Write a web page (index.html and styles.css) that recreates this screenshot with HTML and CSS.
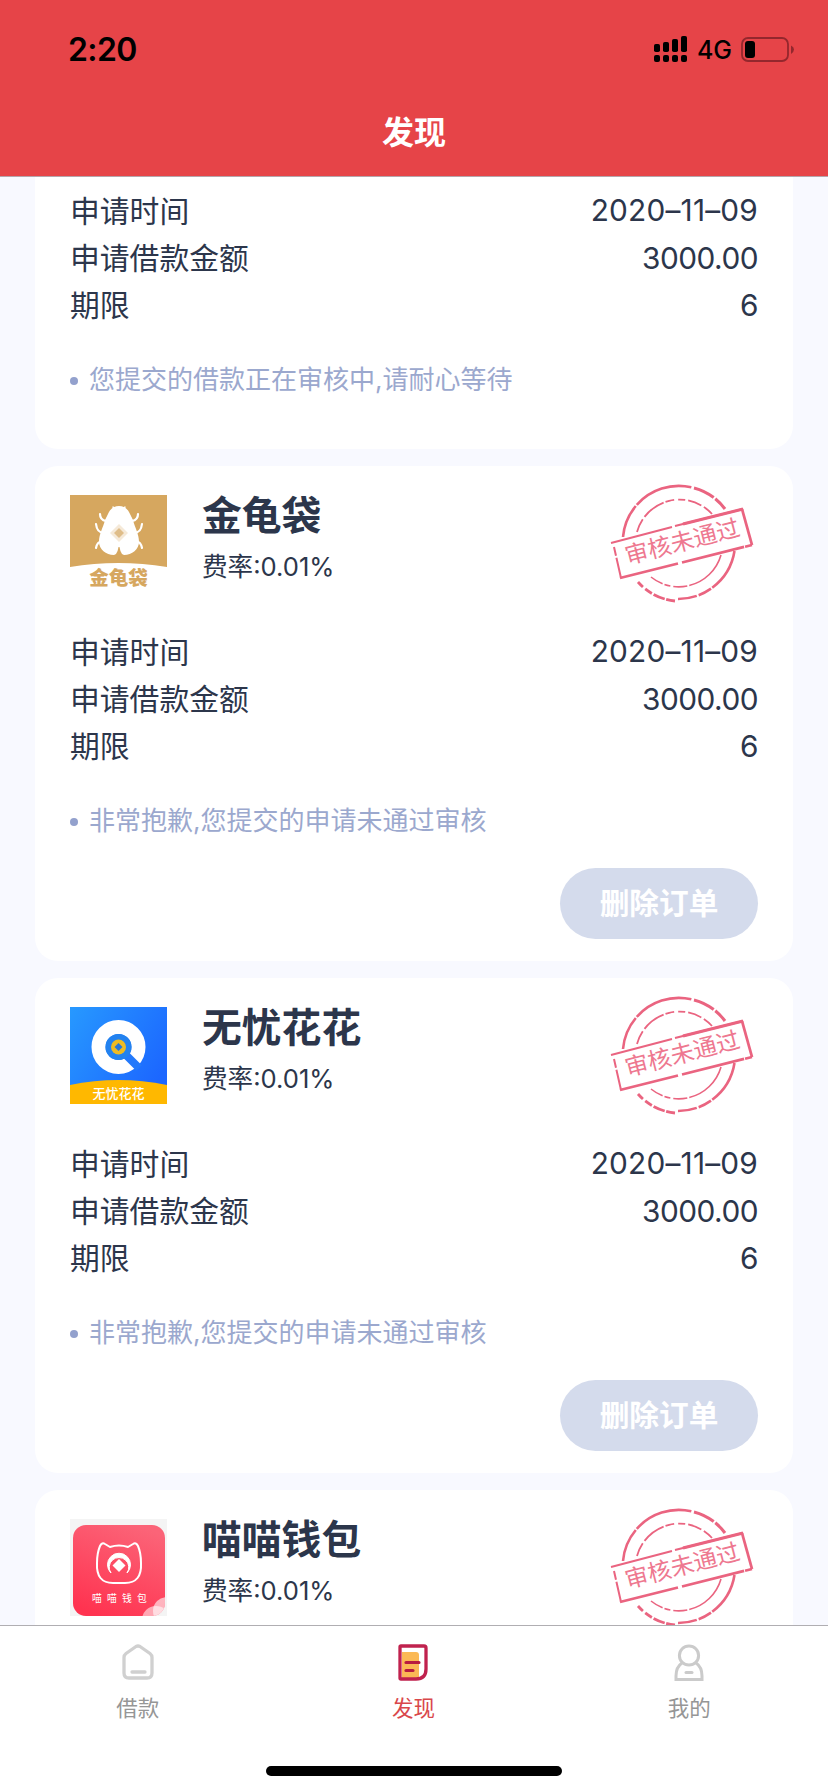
FILE: index.html
```html
<!DOCTYPE html>
<html lang="zh-CN">
<head>
    <meta charset="UTF-8">
    <meta name="viewport" content="width=device-width, initial-scale=1.0">
    <title>发现</title>
    <link rel="stylesheet" href="styles.css">
</head>
<body>
    <header class="header">
        <div class="status">
            <span class="clock">2:20</span>
            <div class="status-right">
                <svg width="34" height="27" viewBox="0 0 34 27">
                    <rect x="0" y="8" width="6" height="8" rx="1.800"/>
                    <rect x="9" y="6" width="6" height="10" rx="1.800"/>
                    <rect x="18" y="3" width="6" height="13" rx="1.800"/>
                    <rect x="27" y="0" width="6" height="16" rx="1.800"/>
                    <rect x="0" y="19" width="6" height="7" rx="2"/>
                    <rect x="9" y="19" width="6" height="7" rx="2"/>
                    <rect x="18" y="19" width="6" height="7" rx="2"/>
                    <rect x="27" y="19" width="6" height="7" rx="2"/>
                </svg>
                <span class="network">4G</span>
                <svg width="54" height="26" viewBox="0 0 54 26">
                    <rect x="1" y="1" width="46" height="23" rx="6" fill="none" stroke="#94272d" stroke-width="1.800"/>
                    <rect x="4" y="4" width="10" height="17" rx="3"/>
                    <path d="M50 8.500Q53 10 53 12.500T50 17Z" fill="#94272d"/>
                </svg>
            </div>
        </div>
        <h1 class="title">发现</h1>
    </header>

    <main class="list">
        <section class="card card-first">
            <dl class="rows">
                <div class="row"><dt>申请时间</dt><dd class="date">2020–11–09</dd></div>
                <div class="row"><dt>申请借款金额</dt><dd>3000.00</dd></div>
                <div class="row"><dt>期限</dt><dd>6</dd></div>
            </dl>
            <p class="note">您提交的借款正在审核中,请耐心等待</p>
        </section>

        <section class="card">
            <div class="head">
                <svg class="logo" viewBox="0 0 97 97">
                    <path d="M0 0H97V72Q48 64 0 72Z" fill="#d6a75f"/>
                    <g fill="none" stroke="#fff" stroke-width="2.200" stroke-linecap="round">
                        <path d="M30 19Q30 25 36 26M68 19Q68 25 62 26M26 29Q27 38 34 38M72 29Q71 38 64 38M26 53Q27 47 32 46M72 53Q71 47 66 46"/>
                        <path stroke-width="1.400" d="M43 12L45 15M55 12L53 15"/>
                    </g>
                    <path d="M49 11C54 11 58 14 60 19L63 25C65 33 69 39 69 47C69 54 62 60 54 60L52 59Q50 56 49.500 52H48.500Q48 56 46 59L44 60C36 60 29 54 29 47C29 39 33 33 35 25L38 19C40 14 44 11 49 11Z" fill="#fff"/>
                    <path d="M49 29L58 38L49 47L40 38Z" fill="#f5e9d8"/>
                    <path d="M49 33L54 38L49 43L44 38Z" fill="#dfbd89"/>
                    <text class="logo-gold" x="48.500" y="89.500">金龟袋</text>
                </svg>
                <div class="info">
                    <h2 class="name">金龟袋</h2>
                    <p class="rate">费率:0.01%</p>
                </div>
                <!-- the other rejected orders reuse this stamp -->
                <svg class="stamp" viewBox="0 0 180 150">
                    <g id="stamp">
                        <g fill="none" stroke="#ea6480">
                            <path stroke-width="2.600" d="M32 72A56 56 0 0 1 101 22.500" stroke-dasharray="34 1.500 60 1"/>
                            <path stroke-width="3" d="M103 23A56 56 0 0 1 134 44" stroke-dasharray="22 2 40"/>
                            <path stroke-width="2.600" d="M143.500 86A57 57 0 0 1 87 134" stroke-dasharray="44 1.500 14 2"/>
                            <path stroke-width="2.800" d="M84 136A57 57 0 0 1 47 117" stroke-dasharray="9 1.500 12 2 8 3"/>
                            <path stroke-width="1.800" d="M46 67A44 44 0 0 1 121 49" stroke-dasharray="14 3 24 2 9 4 7 3"/>
                            <path stroke-width="1.600" d="M130 90A44 44 0 0 1 60 112" stroke-dasharray="46 2 14 3 6 2"/>
                            <path stroke-width="2" d="M20 78L81 62M84 61L152 44"/>
                            <path stroke-width="3" d="M92 59L152 44"/>
                            <path stroke-width="2.800" d="M151 44L161 80"/>
                            <path stroke-width="2" d="M23 82L30 113" stroke-dasharray="9 2 30"/>
                            <path stroke-width="2.800" d="M29 113L87 98.500M91 97.500L161 80" stroke-dasharray="64 1"/>
                        </g>
                        <text class="stamp-text" transform="translate(36.500 99.500) rotate(-14.500)">审核未通过</text>
                    </g>
                </svg>
            </div>
            <dl class="rows">
                <div class="row"><dt>申请时间</dt><dd class="date">2020–11–09</dd></div>
                <div class="row"><dt>申请借款金额</dt><dd>3000.00</dd></div>
                <div class="row"><dt>期限</dt><dd>6</dd></div>
            </dl>
            <p class="note">非常抱歉,您提交的申请未通过审核</p>
            <button class="delete">删除订单</button>
        </section>

        <section class="card">
            <div class="head">
                <svg class="logo" viewBox="0 0 97 97">
                    <defs>
                        <linearGradient id="blue" x1="0" y1="0" x2="1" y2="0.600">
                            <stop offset="0" stop-color="#2799ff"/>
                            <stop offset="1" stop-color="#1c67ff"/>
                        </linearGradient>
                    </defs>
                    <rect width="97" height="97" fill="url(#blue)"/>
                    <circle cx="48.500" cy="40" r="20" fill="none" stroke="#fff" stroke-width="14"/>
                    <path d="M53 45L69 61" stroke="#2379fb" stroke-width="8"/>
                    <circle cx="48.500" cy="40" r="13" fill="#2382ef"/>
                    <circle cx="48.500" cy="40" r="7.500" fill="#eebb22"/>
                    <path d="M48.500 36L52.500 40L48.500 44L44.500 40Z" fill="#2476db"/>
                    <path d="M0 78Q48 68 97 78V97H0Z" fill="#ffb800"/>
                    <text class="logo-white" x="48.500" y="90.500">无忧花花</text>
                </svg>
                <div class="info">
                    <h2 class="name">无忧花花</h2>
                    <p class="rate">费率:0.01%</p>
                </div>
                <svg class="stamp" viewBox="0 0 180 150"><use href="#stamp"/></svg>
            </div>
            <dl class="rows">
                <div class="row"><dt>申请时间</dt><dd class="date">2020–11–09</dd></div>
                <div class="row"><dt>申请借款金额</dt><dd>3000.00</dd></div>
                <div class="row"><dt>期限</dt><dd>6</dd></div>
            </dl>
            <p class="note">非常抱歉,您提交的申请未通过审核</p>
            <button class="delete">删除订单</button>
        </section>

        <section class="card">
            <div class="head">
                <svg class="logo" viewBox="0 0 97 97">
                    <defs>
                        <linearGradient id="pink" x1="0.700" y1="0" x2="0.300" y2="1">
                            <stop offset="0" stop-color="#fb6478"/>
                            <stop offset="1" stop-color="#ff3350"/>
                        </linearGradient>
                        <clipPath id="tile"><rect x="3" y="6" width="92" height="91" rx="13"/></clipPath>
                    </defs>
                    <rect width="97" height="97" fill="#f4f4f4"/>
                    <g clip-path="url(#tile)">
                        <rect x="3" y="6" width="92" height="91" fill="url(#pink)"/>
                        <circle cx="97" cy="92" r="14" fill="#fff" opacity="0.600"/>
                        <circle cx="86" cy="101" r="14" fill="#fff" opacity="0.550"/>
                    </g>
                    <path d="M30 27Q32 23 35 25L40 28Q49 25 58 28L63 25Q66 23 68 27Q71 34 71 44Q72 64 55 64H43Q26 64 27 44Q27 34 30 27Z" fill="none" stroke="#fff" stroke-width="2"/>
                    <path d="M41 54A11.500 11.500 0 1 1 57 54A9.800 9.800 0 1 0 41 54Z" fill="#fff" stroke="#fff"/>
                    <path d="M49 40L55.500 46.500L49 53L42.500 46.500Z" fill="#fff"/>
                    <text class="logo-thin" x="52" y="82.500">喵喵钱包</text>
                </svg>
                <div class="info">
                    <h2 class="name">喵喵钱包</h2>
                    <p class="rate">费率:0.01%</p>
                </div>
                <svg class="stamp" viewBox="0 0 180 150"><use href="#stamp"/></svg>
            </div>
        </section>
    </main>

    <footer class="footer">
        <nav class="tabs">
            <a class="tab">
                <svg width="40" height="40" viewBox="0 0 40 40" fill="none" stroke="#d0d0d0" stroke-width="3.300" stroke-linecap="round" stroke-linejoin="round">
                    <path d="M18 4.500Q20 3.500 22 4.500L32 11.500Q34 13 34 15.500V31Q34 36 29 36H11Q6 36 6 31V15.500Q6 13 8 11.500Z"/>
                    <path d="M14 30H27"/>
                </svg>
                <span>借款</span>
            </a>
            <a class="tab tab-on">
                <svg width="40" height="40" viewBox="0 0 40 40">
                    <path d="M8 10H22Q25 10 25 13V36H8Z" fill="#fbb955"/>
                    <path d="M7 4H30Q32 4 32 6V27Q32 37 22 37H7Q6 37 6 36V5Q6 4 7 4Z" fill="none" stroke="#c0224e" stroke-width="3.300" stroke-linejoin="round"/>
                    <path d="M12 20.500H25M12 28.500H19" stroke="#b81c40" stroke-width="3.200" stroke-linecap="round"/>
                </svg>
                <span>发现</span>
            </a>
            <a class="tab">
                <svg width="40" height="40" viewBox="0 0 40 40" fill="none" stroke="#cbcbcb" stroke-width="3">
                    <circle cx="20" cy="13.500" r="9.600"/>
                    <path d="M13 21Q7 25 7 34V37.500H33V34Q33 25 27 21"/>
                    <path d="M17 30.500H23" stroke-linecap="round"/>
                </svg>
                <span>我的</span>
            </a>
        </nav>
        <div class="home-bar"></div>
    </footer>
</body>
</html>
```
FILE: styles.css
```css
* {
    box-sizing: border-box;
    margin: 0;
    padding: 0;
}
body {
    width: 828px;
    height: 1792px;
    overflow: hidden;
    display: flex;
    flex-direction: column;
    background: #f8f9ff;
    color: #2c364b;
    font-family: Inter, "Noto Sans CJK SC", sans-serif;
}
.header {
    height: 177px;
    flex: none;
    background: #e64448;
    border-bottom: 1px solid #b5a5ab;
}
.status {
    height: 99px;
    padding: 0 33px 0 68px;
    display: flex;
    justify-content: space-between;
    align-items: center;
    color: #000;
}
.clock {
    font-size: 32px;
    font-weight: 600;
    letter-spacing: -0.6px;
}
.status-right {
    display: flex;
    align-items: center;
    gap: 9px;
}
.network {
    font-size: 25px;
    font-weight: 500;
}
.title {
    color: #fff;
    font-size: 32px;
    line-height: 46px;
    padding-top: 11px;
    font-weight: 700;
    text-align: center;
}
.list {
    flex: 1;
    min-height: 0;
    overflow: hidden;
    padding: 0 35px;
}
.card {
    height: 494.5px;
    margin-bottom: 17.5px;
    padding: 0 35px;
    background: #fff;
    border-radius: 23px;
}
.card-first {
    height: 272px;
    margin-bottom: 17px;
    padding-top: 9px;
    border-radius: 0 0 23px 23px;
}
.head {
    height: 161px;
    padding-top: 29px;
    display: flex;
}
.logo {
    width: 97px;
    height: 97px;
    flex: none;
}
.info {
    flex: 1;
    padding-left: 35px;
}
.name {
    font-size: 39.8px;
    line-height: 42px;
    font-weight: 700;
}
.rate {
    margin-top: 11px;
    font-size: 25.6px;
    line-height: 38px;
}
.stamp {
    width: 180px;
    height: 150px;
    flex: none;
    margin: -30px -13px 0 0;
}
.stamp-text {
    fill: #ee7890;
    font-size: 23.5px;
    font-weight: 400;
}
.row {
    height: 47.4px;
    display: flex;
    justify-content: space-between;
    align-items: center;
    font-size: 29.8px;
}
.row dt {
    padding-bottom: 2px;
}
.row dd {
    padding-top: 1px;
    letter-spacing: -0.5px;
}
.row .date {
    letter-spacing: 0.2px;
}
.note {
    margin-top: 32px;
    height: 40px;
    padding-bottom: 1px;
    display: flex;
    align-items: center;
    font-size: 26px;
    line-height: 36px;
    color: #9ba8ce;
}
.note::before {
    content: "";
    width: 8px;
    height: 8px;
    margin: 3px 11px 0 0;
    border-radius: 50%;
    background: #93a1cd;
}
.delete {
    display: block;
    width: 198px;
    height: 71px;
    margin: 27px 0 0 auto;
    padding-bottom: 4px;
    border: none;
    border-radius: 36px;
    background: #d4dbec;
    color: #fff;
    font-family: inherit;
    font-size: 29.7px;
    font-weight: 700;
}
.logo-gold {
    fill: #d6a75f;
    font-size: 19.5px;
    font-weight: 900;
    text-anchor: middle;
}
.logo-white {
    fill: #fff;
    font-size: 13px;
    font-weight: 500;
    text-anchor: middle;
}
.logo-thin {
    fill: #fff;
    font-size: 9.8px;
    letter-spacing: 5.2px;
    text-anchor: middle;
}
.footer {
    height: 167px;
    flex: none;
    background: #fff;
    border-top: 1px solid #b0aeb2;
}
.tabs {
    height: 140px;
    padding: 16px 1px 0 0;
    display: flex;
}
.tab {
    flex: 1;
    display: flex;
    flex-direction: column;
    align-items: center;
    gap: 9px;
    color: #969696;
    font-size: 21.5px;
    line-height: 34px;
}
.tab-on {
    color: #d9474b;
}
.home-bar {
    width: 296px;
    height: 10px;
    margin: 0 auto;
    border-radius: 5px;
    background: #000;
}
```
